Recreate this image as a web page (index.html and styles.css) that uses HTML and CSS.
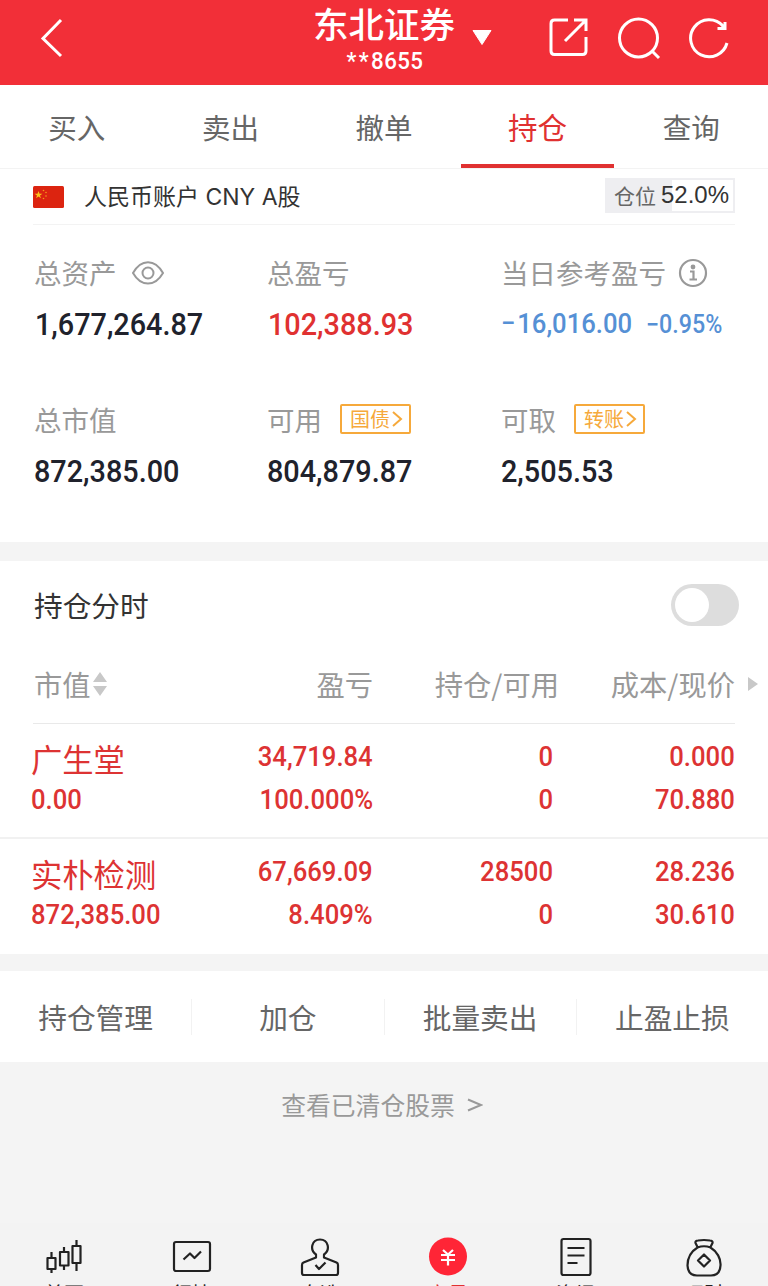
FILE: index.html
```html
<!DOCTYPE html>
<html lang="zh-CN">
<head>
<meta charset="utf-8">
<title>东北证券 持仓</title>
<link rel="stylesheet" href="styles.css">
</head>
<body>
<div class="app">
  <header class="topbar">
    <svg class="back" width="24" height="40" viewBox="0 0 24 40"><path d="M21 2 3 20.500 21 38"/></svg>
    <div class="broker">
      <div class="broker-name">东北证券</div>
      <div class="broker-id"><span class="stars">**</span>8655</div>
    </div>
    <svg class="caret" width="22" height="18" viewBox="0 0 22 18"><path d="M2 1.500H20L11 15.500Z"/></svg>
    <div class="tools">
      <svg width="42" height="42" viewBox="0 0 42 42"><path d="M20 3H6.500Q3 3 3 6.500V34Q3 37.500 6.500 37.500H34.500Q38 37.500 38 34V20M26 3H38V14M38 3 17 24"/></svg>
      <svg width="44" height="44" viewBox="0 0 44 44"><circle cx="21.500" cy="21" r="19"/><path d="M35 34 42 41"/></svg>
      <svg width="42" height="44" viewBox="0 0 42 44"><path d="M35 9A18.500 18.500 0 1 0 39 26M37 5V11.500H29.500M37 11.500 33 7"/></svg>
    </div>
  </header>

  <nav class="tabs">
    <a class="tab">买入</a><a class="tab">卖出</a><a class="tab">撤单</a><a class="tab active">持仓</a><a class="tab">查询</a>
  </nav>

  <section class="account">
    <svg class="flag" width="31" height="22" viewBox="0 0 31 22"><rect width="31" height="22" rx="1.500" fill="#dc2410"/><path fill="#fcc21b" d="m5.500 5 1 2.700h2.900L7 9.400l.9 2.800-2.400-1.700-2.400 1.700.9-2.800-2.400-1.700h2.900z"/><g fill="#f39a1b"><circle cx="10.500" cy="4.500" r=".8"/><circle cx="13" cy="6.500" r=".8"/><circle cx="13" cy="10" r=".8"/><circle cx="10.500" cy="12.500" r=".8"/></g></svg>
    <span class="account-name">人民币账户 CNY A股</span>
    <div class="position"><span class="position-label">仓位</span><span class="position-value">52.0%</span></div>
  </section>

  <section class="assets">
    <div class="asset">
      <div class="asset-label">总资产<svg class="eye" width="34" height="26" viewBox="0 0 34 26"><path d="M2 13C10-1.500 24-1.500 32 13 24 27 10 27 2 13Z"/><circle cx="17" cy="13" r="5.500"/></svg></div>
      <div class="asset-value first"><span class="num">1,677,264.87</span></div>
    </div>
    <div class="asset">
      <div class="asset-label">总盈亏</div>
      <div class="asset-value up first"><span class="num">102,388.93</span></div>
    </div>
    <div class="asset">
      <div class="asset-label">当日参考盈亏<svg class="info" width="30" height="30" viewBox="0 0 30 30"><circle cx="15" cy="15" r="13"/><circle class="dot" cx="15" cy="9" r="2.400"/><path d="M12 13.500H15.500V21M11.500 21.500H19"/></svg></div>
      <div class="asset-value down"><span class="num today"><span class="minus">−</span>16,016.00</span><span class="num pct">−0.95%</span></div>
    </div>
    <div class="asset">
      <div class="asset-label">总市值</div>
      <div class="asset-value"><span class="num">872,385.00</span></div>
    </div>
    <div class="asset">
      <div class="asset-label">可用<span class="chip">国债<svg width="12" height="18" viewBox="0 0 12 18"><path d="M2 2 10 9 2 16"/></svg></span></div>
      <div class="asset-value"><span class="num">804,879.87</span></div>
    </div>
    <div class="asset">
      <div class="asset-label">可取<span class="chip">转账<svg width="12" height="18" viewBox="0 0 12 18"><path d="M2 2 10 9 2 16"/></svg></span></div>
      <div class="asset-value"><span class="num">2,505.53</span></div>
    </div>
  </section>

  <section class="holdings">
    <div class="intraday"><span class="intraday-title">持仓分时</span><span class="switch"><span class="knob"></span></span></div>
    <div class="grid-row head">
      <div class="head-first">市值<svg width="16" height="24" viewBox="0 0 16 24"><path d="M8 0 15 10H1ZM8 24 15 14H1Z"/></svg></div>
      <div>盈亏</div>
      <div>持仓/可用</div>
      <div>成本/现价</div>
      <svg class="more" width="12" height="16" viewBox="0 0 12 16"><path d="M1 1 11 8 1 15Z"/></svg>
    </div>
    <div class="grid-row stock">
      <div class="cell name-cell"><span class="stock-name">广生堂</span><span class="num">0.00</span></div>
      <div class="cell"><span class="num">34,719.84</span><span class="num">100.000%</span></div>
      <div class="cell qty"><span class="num">0</span><span class="num">0</span></div>
      <div class="cell"><span class="num">0.000</span><span class="num">70.880</span></div>
    </div>
    <div class="grid-row stock last">
      <div class="cell name-cell"><span class="stock-name">实朴检测</span><span class="num">872,385.00</span></div>
      <div class="cell"><span class="num">67,669.09</span><span class="num">8.409%</span></div>
      <div class="cell qty"><span class="num">28500</span><span class="num">0</span></div>
      <div class="cell"><span class="num">28.236</span><span class="num">30.610</span></div>
    </div>
  </section>

  <section class="actions">
    <a class="action">持仓管理</a><a class="action">加仓</a><a class="action">批量卖出</a><a class="action">止盈止损</a>
  </section>

  <div class="cleared">查看已清仓股票<svg width="16" height="16" viewBox="0 0 16 16"><path d="M1 2.500 14 8 1 13.500"/></svg></div>

  <footer class="bottom">
    <a class="item"><svg width="40" height="40" viewBox="0 0 40 40"><path d="M3.500 20H11.500V31H3.500ZM7.500 14V20M7.500 31V35M16 14H24.500V27.500H16ZM20 9V14M20 27.500V32M28.500 8H36.500V25H28.500ZM32.500 2V8M32.500 25V33"/></svg><span>首页</span></a>
    <a class="item"><svg width="40" height="40" viewBox="0 0 40 40"><rect x="2" y="4" width="36" height="29" rx="2"/><path d="M11.500 21.500 18 15.500 22.500 20 29 13.500"/></svg><span>行情</span></a>
    <a class="item"><svg width="40" height="40" viewBox="0 0 40 40"><path d="M16 16.500C9.500 12 11.500 1.500 20 1.500S30.500 12 24 16.500V19.500L36.500 24.500Q38 25.200 38 27V35Q38 37 36 37H4Q2 37 2 35V27Q2 25.200 3.500 24.500L16 19.500ZM15.500 27 19 31 25.500 24.500"/></svg><span>自选</span></a>
    <a class="item on"><svg width="40" height="40" viewBox="0 0 40 40"><circle class="disc" cx="20" cy="18.500" r="19"/><path d="M15 12 20 16.500 25 12M13 17H27M13 22H27M20 16V27.500"/></svg><span>交易</span></a>
    <a class="item"><svg width="40" height="40" viewBox="0 0 40 40"><rect x="5.500" y="1" width="29" height="36" rx="2"/><path d="M11.500 10H28.500M11.500 17.500H28.500M11.500 25H21.500"/></svg><span>资讯</span></a>
    <a class="item"><svg width="40" height="40" viewBox="0 0 40 40"><path d="M13.500 9 11.500 5Q11 2.800 14 2.500 20 1.500 26 2.500 29 2.800 28.500 5L26.500 9M13.500 9.500Q20 7 26.500 9.500C33 13.500 37 20.500 36.500 27.500Q36 37.500 27 37.500H13Q4 37.500 3.500 27.500C3.500 20.500 7 13.500 13.500 9.500ZM20 16.500 26 22.500 20 28.500 14 22.500Z"/></svg><span>理财</span></a>
  </footer>
</div>
</body>
</html>
```
FILE: styles.css
```css
* { box-sizing: border-box; }
body {
  margin: 0;
  background: #f4f4f4;
  font-family: "Noto Sans CJK SC", sans-serif;
  overflow: hidden;
}
svg { display: block; flex: none; fill: none; }
.app {
  width: 768px;
  height: 1286px;
  overflow: hidden;
  display: flex;
  flex-direction: column;
}
.app > * { flex: none; }
.num {
  display: inline-block;
  font-family: Roboto, sans-serif;
  font-weight: 500;
  transform: scaleX(.9);
  transform-origin: left center;
  white-space: nowrap;
}

/* Top bar */
.topbar {
  height: 85px;
  background: #f22f38;
  color: #fff;
  display: grid;
  grid-template-columns: 40px 270px 148px 84px 1fr;
  align-items: start;
}
.back { grid-column: 1; margin: 18px 0 0 40px; stroke: #fff; stroke-width: 3; }
.broker { grid-column: 3; text-align: center; }
.broker-name { font-size: 35.5px; line-height: 46px; font-weight: 500; white-space: nowrap; }
.broker-id {
  padding-left: 2px;
  font-family: Roboto, sans-serif;
  font-size: 23.5px;
  font-weight: 500;
  line-height: 30px;
  letter-spacing: .4px;
  transform: scaleX(.95);
}
.stars { letter-spacing: 2.500px; }
.caret { margin: 29px 0 0 13px; fill: #fff; stroke: #fff; stroke-linejoin: round; }
.tools {
  display: flex;
  gap: 27px;
  padding: 17px 0 0 6px;
  stroke: #fff;
  stroke-width: 3;
}

/* Tabs */
.tabs { height: 84px; background: #fff; display: flex; border-bottom: 1px solid #f3f3f3; }
.tab {
  flex: 1;
  height: 83px;
  text-align: center;
  font-size: 28.5px;
  line-height: 83px;
  color: #666;
}
.tab.active { color: #e03131; font-size: 29.5px; border-bottom: 4px solid #e03131; }

/* Account */
.account {
  height: 56px;
  background: #fff;
  display: flex;
  align-items: center;
  padding: 0 33px;
  background-image: linear-gradient(#f3f3f3, #f3f3f3);
  background-size: 702px 1px;
  background-position: 33px 55px;
  background-repeat: no-repeat;
}
.account-name {
  margin: -4px 0 0 20px;
  font-family: Inter, "Noto Sans CJK SC", sans-serif;
  font-size: 23px;
  color: #333;
}
.position {
  margin: -4px 0 0 auto;
  width: 130px;
  height: 35px;
  border: 2px solid #eeeef1;
  background: linear-gradient(90deg, #eeeef1 51.500%, #fff 51.500%);
  display: flex;
  align-items: center;
  padding-left: 7px;
  gap: 5px;
  white-space: nowrap;
}
.position-label { font-size: 21px; line-height: 30px; margin-top: -1px; color: #666; }
.position-value { font-family: "Liberation Sans", sans-serif; font-size: 24px; line-height: 30px; color: #333; }

/* Assets */
.assets {
  height: 317px;
  background: #fff;
  display: grid;
  grid-template-columns: 233px 234px 1fr;
  grid-template-rows: 147px 147px;
  padding: 22px 0 0 34px;
}
.asset-label {
  height: 50px;
  display: flex;
  align-items: center;
  font-size: 27.5px;
  line-height: 50px;
  color: #999;
}
.asset-value {
  height: 54px;
  line-height: 54px;
  font-size: 32px;
  color: #20222c;
  display: flex;
}
.asset-value.first { padding-left: 1px; }
.asset-value.up { color: #e03131; }
.asset-value.down { color: #5590d5; }
.today { font-size: 28.500px; width: 145px; }
.minus { margin-right: 2px; }
.pct { font-size: 25px; line-height: 56px; font-weight: 500; transform: scaleX(.93); }
.eye { margin: 1px 0 0 14px; stroke: #999; stroke-width: 2; }
.info { margin: 1px 0 0 12px; stroke: #999; stroke-width: 2.200; }
.info .dot { fill: #999; stroke: none; }
.chip {
  margin: 0 0 0 18px;
  width: 71px;
  height: 30px;
  border: 2px solid #f6a93b;
  border-radius: 2px;
  display: flex;
  align-items: center;
  padding-left: 8px;
  gap: 1px;
  font-size: 20px;
  line-height: 26px;
  color: #f6a93b;
  white-space: nowrap;
}
.chip svg { stroke: #f6a93b; stroke-width: 2; }

/* Holdings */
.holdings { background: #fff; border-top: 19px solid #f4f4f4; }
.intraday {
  height: 89px;
  padding: 0 29px 2px 34px;
  display: flex;
  align-items: center;
  justify-content: space-between;
}
.intraday-title { font-size: 28.700px; color: #333; }
.switch { width: 68px; height: 42px; border-radius: 21px; background: #ddd; padding: 4px; }
.knob { display: block; width: 34px; height: 34px; border-radius: 50%; background: #fff; }
.grid-row {
  display: grid;
  grid-template-columns: 180px 159px 186px 176px 1fr;
  padding-left: 34px;
  text-align: right;
}
.head {
  height: 74px;
  align-items: center;
  padding-bottom: 7px;
  font-size: 28.300px;
  line-height: 66px;
  color: #999;
  background: linear-gradient(#e9e9e9, #e9e9e9) 33px 73px / 702px 1px no-repeat;
}
.head-first { display: flex; align-items: center; gap: 1px; }
.head svg { fill: #c8c8c8; }
.more { margin-left: 12px; }
.stock {
  height: 115px;
  padding-top: 11px;
  border-bottom: 2px solid #f1f1f1;
  color: #dd3333;
}
.stock.last { border-bottom: 0; }
.cell {
  display: flex;
  flex-direction: column;
  align-items: flex-end;
  font-size: 28.500px;
  line-height: 43px;
}
.cell .num { transform-origin: right center; }
.qty { padding-right: 6px; }
.name-cell { align-items: flex-start; margin-left: -3px; }
.name-cell .num { transform-origin: left center; }
.stock-name { font-size: 31.300px; line-height: 43px; padding-top: 2px; height: 43px; }

/* Actions */
.actions {
  height: 108px;
  border-top: 17px solid #f4f4f4;
  background: #fff;
  display: flex;
  align-items: center;
}
.action {
  flex: 1;
  height: 36px;
  line-height: 36px;
  font-size: 28.700px;
  text-align: center;
  color: #666;
  border-right: 1px solid #f2f2f2;
}
.action:last-child { border-right: 0; }
.cleared {
  height: 161px;
  padding: 25px 4px 0 0;
  display: flex;
  align-items: flex-start;
  justify-content: center;
  gap: 12px;
  font-size: 24.800px;
  line-height: 34px;
  color: #999;
}
.cleared svg { margin-top: 10px; stroke: #999; stroke-width: 2; }

/* Bottom bar */
.bottom { height: 63px; display: flex; background: #f3f3f3; padding-top: 15px; }
.item {
  flex: 1;
  display: flex;
  flex-direction: column;
  align-items: center;
  font-size: 20px;
  line-height: 32px;
  color: #222;
}
.item svg { stroke: #222; stroke-width: 2.200; overflow: visible; stroke-linejoin: round; }
.item.on { color: #e03131; }
.item.on svg { stroke: #fff; }
.item.on .disc { fill: #ff2536; stroke: none; }
```
